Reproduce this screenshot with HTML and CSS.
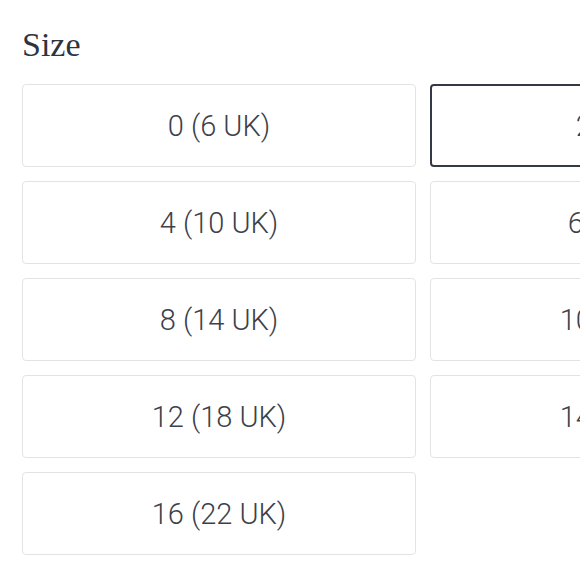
FILE: index.html
```html
<!DOCTYPE html>
<html lang="en">
<head>
<meta charset="utf-8">
<title>Size</title>
<link rel="stylesheet" href="styles.css">
</head>
<body>
<div class="size-picker">
  <h2 class="size-title">Size</h2>
  <div class="size-grid">
    <button class="size-option">0 (6 UK)</button>
    <button class="size-option is-selected">2 (8 UK)</button>
    <button class="size-option">4 (10 UK)</button>
    <button class="size-option">6 (12 UK)</button>
    <button class="size-option">8 (14 UK)</button>
    <button class="size-option">10 (16 UK)</button>
    <button class="size-option">12 (18 UK)</button>
    <button class="size-option">14 (20 UK)</button>
    <button class="size-option">16 (22 UK)</button>
  </div>
</div>
</body>
</html>
```

FILE: styles.css
```css
html, body {
  margin: 0;
  padding: 0;
  background: #ffffff;
  overflow: hidden;
}

.size-picker {
  padding: 25px 0 0 22px;
  width: 802px;
}

.size-title {
  margin: 0 0 19px 0;
  font-family: "Liberation Serif", "Times New Roman", serif;
  font-weight: 400;
  font-size: 34px;
  line-height: 40px;
  color: #2d3340;
}

.size-grid {
  display: grid;
  grid-template-columns: 394px 394px;
  grid-auto-rows: 83px;
  gap: 14px;
}

.size-option {
  box-sizing: border-box;
  margin: 0;
  padding: 0;
  background: #ffffff;
  border: 1px solid #e3e3e3;
  border-radius: 4px;
  font-family: Roboto, "Liberation Sans", sans-serif;
  font-weight: 300;
  font-size: 29px;
  color: #3c414b;
  text-align: center;
  cursor: pointer;
}

.size-option.is-selected {
  border: 2px solid #333a45;
}
```
